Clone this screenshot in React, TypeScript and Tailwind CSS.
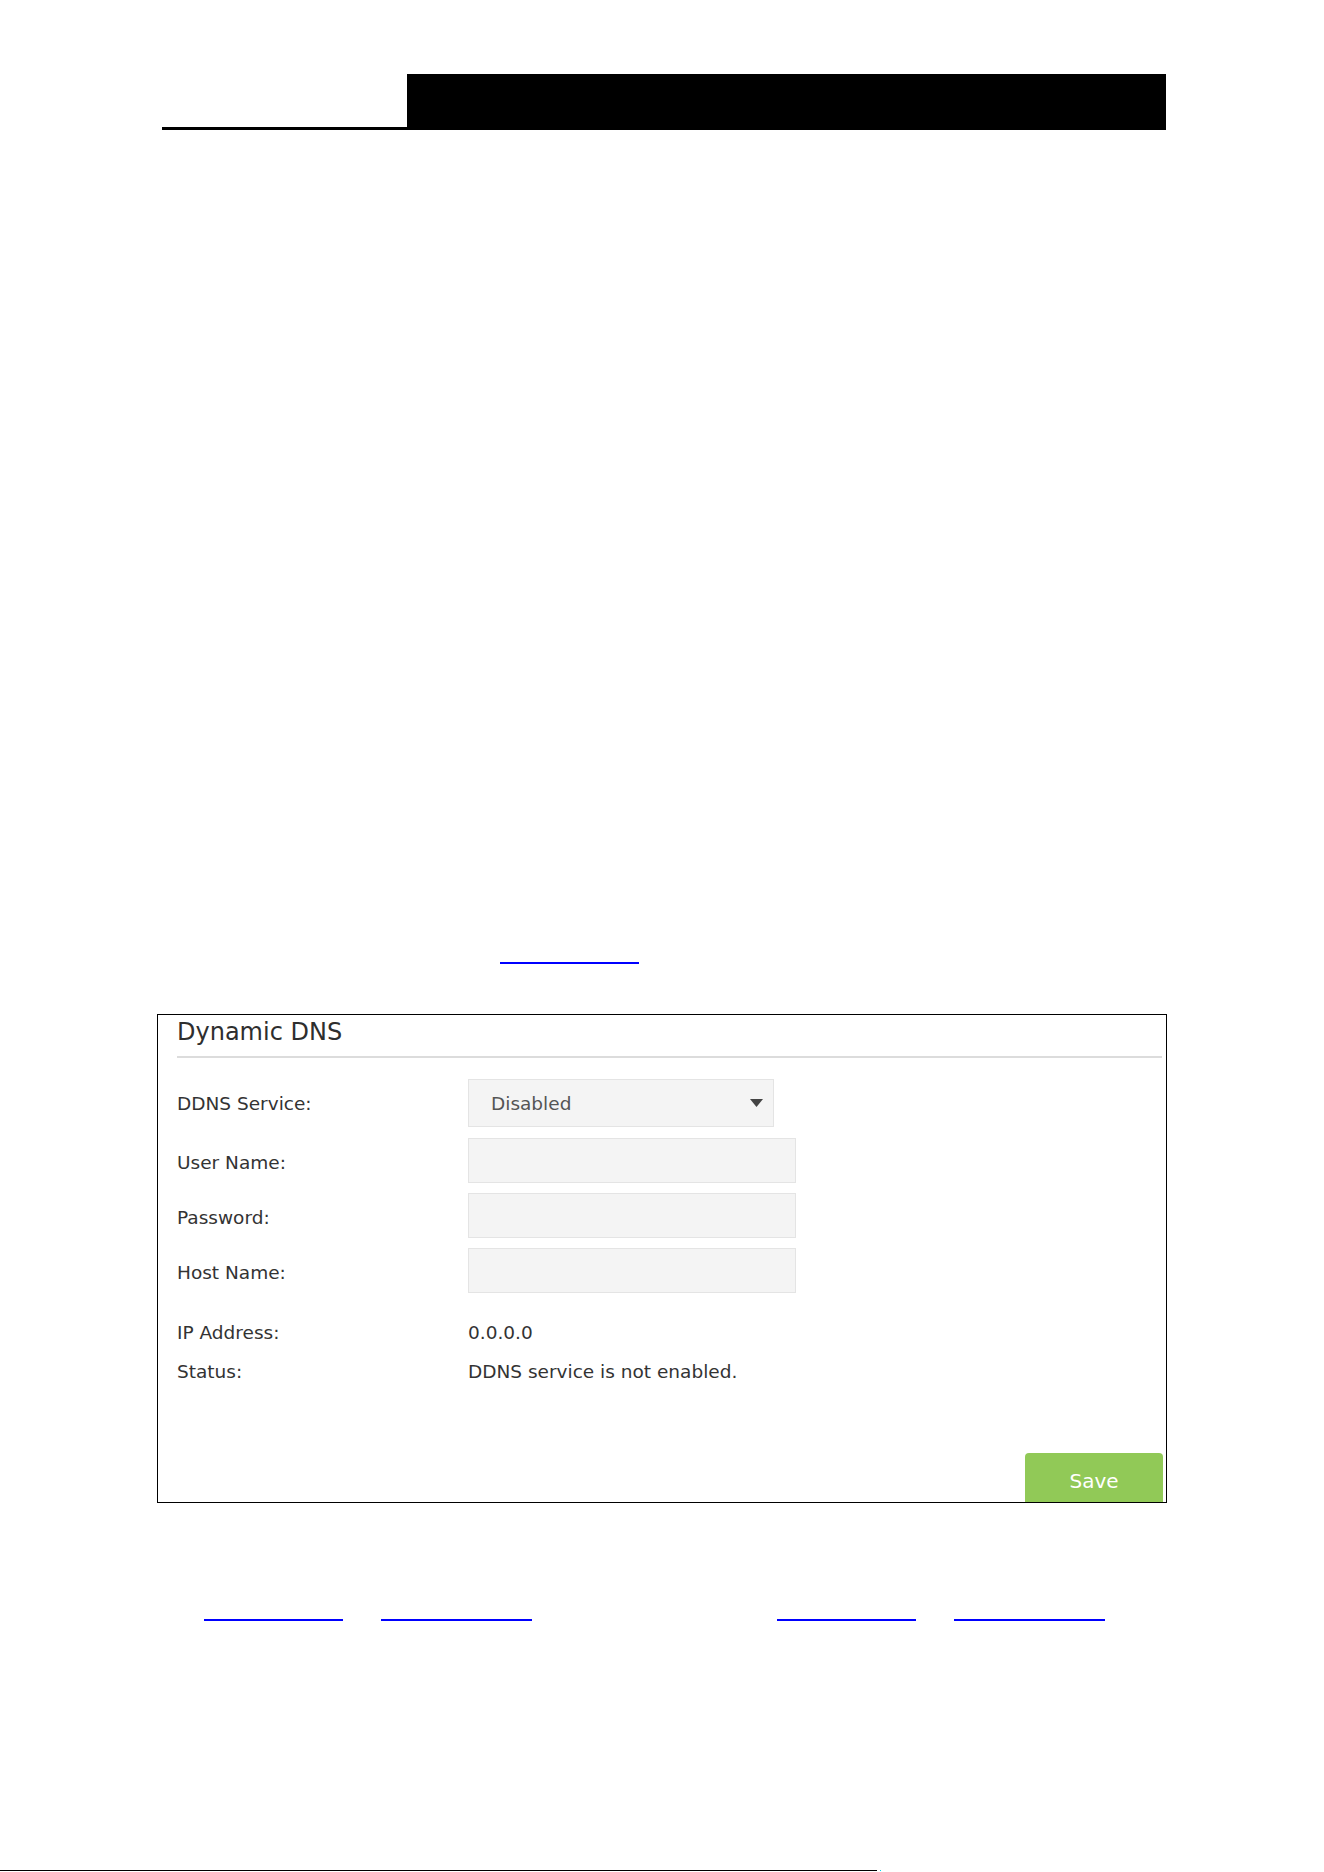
const fields = [
  { label: "User Name:", mt: "mt-[11px]" },
  { label: "Password:", mt: "mt-[10px]" },
  { label: "Host Name:", mt: "mt-[10px]" },
];

const footerLinks = [
  { id: 1, left: "ml-[204px]", width: "w-[139px]" },
  { id: 2, left: "ml-[38px]", width: "w-[151px]" },
  { id: 3, left: "ml-[245px]", width: "w-[139px]" },
  { id: 4, left: "ml-[38px]", width: "w-[151px]" },
];

function Caret() {
  return (
    <svg width="13" height="8" viewBox="0 0 13 8" className="block">
      <polygon points="0,0 13,0 6.5,8" fill="#444444" />
    </svg>
  );
}

export default function App() {
  return (
    <div className="relative min-h-[1872px] w-[1324px] bg-white font-['DejaVu_Sans',sans-serif] text-[#333333]">
      {/* page header */}
      <div className="flex pt-[74px] pl-[162px]">
        <div className="h-[56px] w-[245px] border-b-[3px] border-black" />
        <div className="h-[56px] w-[759px] bg-black" />
      </div>

      {/* inline link */}
      <div className="mt-[832px] pl-[500px]">
        <a href="#" className="block h-[2px] w-[139px] bg-[#0000ff]" />
      </div>

      {/* Dynamic DNS panel */}
      <div className="mt-[50px] ml-[157px] flex w-[1010px] flex-col border border-black pt-[4px] pr-[3px] pl-[19px]">
        <h2 className="h-[26px] text-[24px] leading-[26px] text-[#2e2e2e]">
          Dynamic DNS
        </h2>
        <div className="mt-[11px] mr-[1px] h-[2px] bg-[#dcdcdc]" />

        <div className="mt-[21px] flex h-[48px] items-center">
          <span className="w-[291px] pt-[2px] text-[18.5px] text-[#333333]">
            DDNS Service:
          </span>
          <div className="flex h-[48px] w-[306px] items-center justify-between border border-[#e4e4e4] bg-[#f4f4f4] pr-[10px] pl-[22px]">
            <span className="pt-[2px] text-[18.5px] text-[#555555]">
              Disabled
            </span>
            <Caret />
          </div>
        </div>

        {fields.map((field) => (
          <div key={field.label} className={`${field.mt} flex h-[45px] items-center`}>
            <span className="w-[291px] pt-[4px] text-[18.5px] text-[#333333]">
              {field.label}
            </span>
            <div className="h-[45px] w-[328px] border border-[#e4e4e4] bg-[#f4f4f4]" />
          </div>
        ))}

        <div className="mt-[29px] flex h-[22px] items-center text-[18.5px] leading-[22px] text-[#333333]">
          <span className="w-[291px]">IP Address:</span>
          <span>0.0.0.0</span>
        </div>
        <div className="mt-[17px] flex h-[22px] items-center text-[18.5px] leading-[22px] text-[#333333]">
          <span className="w-[291px]">Status:</span>
          <span>DDNS service is not enabled.</span>
        </div>

        <div className="mt-[70px] flex justify-end">
          <button className="flex h-[49px] w-[138px] items-center justify-center rounded-t-[4px] bg-[#91c957] pt-[6px] text-[20px] text-white">
            Save
          </button>
        </div>
      </div>

      {/* footer links */}
      <div className="mt-[116px] flex">
        {footerLinks.map((link) => (
          <a
            key={link.id}
            href="#"
            className={`${link.left} ${link.width} block h-[2px] bg-[#0000ff]`}
          />
        ))}
      </div>

      {/* footer rule */}
      <div className="mt-[249px] flex items-center">
        <div className="h-[1px] w-[877px] bg-black" />
        <div className="ml-[3px] h-[1px] w-[1px] bg-[#00d8f0]" />
      </div>
    </div>
  );
}
